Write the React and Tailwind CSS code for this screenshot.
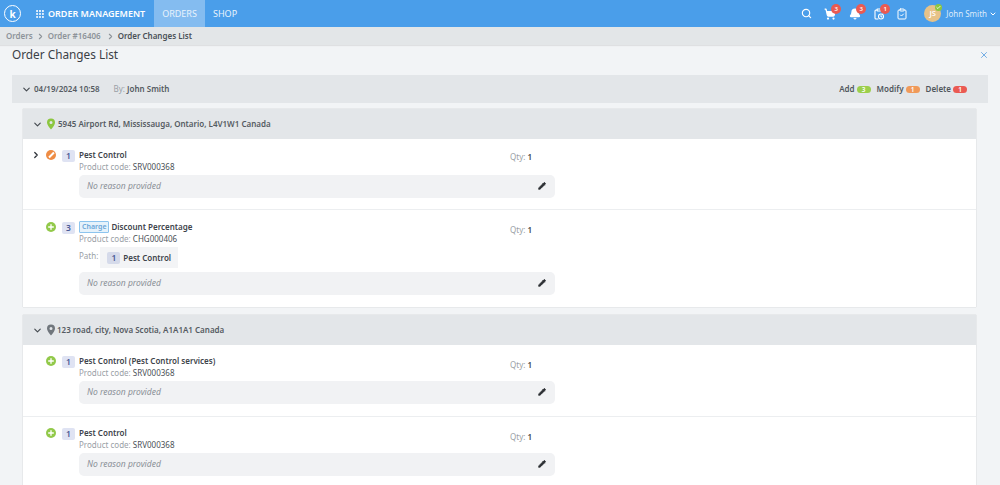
import React from "react";
import { Search, ShoppingCart, Bell, ClipboardCheck, ChevronDown, ChevronRight, X, Pencil, Plus, Check, Grip } from "lucide-react";

const font = { fontFamily: '"Noto Sans", "Open Sans", sans-serif' };

function Badge({ n }) {
  return <span className="absolute -top-[4px] left-[7px] w-[10px] h-[10px] rounded-full bg-[#ea5a52] text-white text-[6px] leading-[10px] text-center font-semibold">{n}</span>;
}

function Pin({ className }) {
  return (
    <svg viewBox="0 0 24 24" width="12" height="12" className={className}>
      <path fill="currentColor" fillRule="evenodd" d="M12 1a8 8 0 0 0-8 8c0 5.5 8 14 8 14s8-8.500 8-14a8 8 0 0 0-8-8zm0 11a3 3 0 1 1 0-6 3 3 0 0 1 0 6z" />
    </svg>
  );
}

function ClipClock() {
  return (
    <svg viewBox="0 0 24 24" width="12" height="12" fill="none" stroke="white" strokeWidth="2.2" strokeLinecap="round" strokeLinejoin="round">
      <path d="M9 4H6a2 2 0 0 0-2 2v14a2 2 0 0 0 2 2h4" />
      <path d="M15 4h3a2 2 0 0 1 2 2v4" />
      <rect x="8" y="2" width="8" height="4" rx="1" />
      <circle cx="16" cy="17" r="5" />
      <path d="M16 15v2l1.500 1" />
    </svg>
  );
}

function StatusIcon({ kind }) {
  if (kind === "add") return <span className="w-[10px] h-[10px] rounded-full bg-[#92c94a] flex items-center justify-center"><Plus size={8} strokeWidth={4} className="text-white" /></span>;
  return <span className="w-[10px] h-[10px] rounded-full bg-[#ee8c44] flex items-center justify-center"><span className="w-[7px] h-[2px] bg-white -rotate-45" /></span>;
}

function Num({ n, muted }) {
  return <span className={`block w-[13px] h-[12px] rounded-[2px] ${muted ? "bg-[#d5daea]" : "bg-[#dfe3f3]"} text-[#4a5a96] text-[8.5px] leading-[12px] text-center font-semibold shrink-0`}>{n}</span>;
}

function Reason() {
  return (
    <div className="h-[23px] w-[476px] rounded-[5px] bg-[#f1f2f4] flex items-center justify-between pl-[8px] pr-[9px]">
      <span className="text-[8.5px] italic text-[#8a9097]">No reason provided</span>
      <Pencil size={8} strokeWidth={3} className="text-[#2c2f33] fill-[#2c2f33] -mt-[2px]" />
    </div>
  );
}

function Item({ kind, num, chevron, charge, name, code, path, pt, h, qtyPt, border = true }) {
  return (
    <div className={`flex ${pt} ${h} ${border ? "border-b border-[#eceef0]" : ""}`}>
      <div className="w-[22px] shrink-0 flex justify-end pr-[4px] pt-[1px]">
        {chevron && <ChevronRight size={10} strokeWidth={3} className="text-[#2f343a]" />}
      </div>
      <div className="w-[17px] shrink-0 pl-[1px] pt-[1px]"><StatusIcon kind={kind} /></div>
      <div className="w-[17px] shrink-0 pt-[1px]"><Num n={num} /></div>
      <div className="w-[476px] shrink-0">
        <div className="flex">
          <div className="w-[431px]">
            <div className="flex items-center h-[12px] gap-[2px] text-[8px] font-semibold text-[#3e444b]">
              {charge && <span className="h-[12px] px-[2px] border border-[#8cc4ee] bg-[#e5f2fb] text-[#6aa6d8] text-[7px] leading-[10px] rounded-[1px]">Charge</span>}
              <span>{name}</span>
            </div>
            <div className={`text-[8px] leading-[11px] text-[#9aa0a6] ${path ? "mb-[2px]" : "mb-[3px]"}`}>Product code: <span className="text-[#4b5157]">{code}</span></div>
          </div>
          <div className={`${qtyPt} text-[8px] leading-[12px] text-[#9aa0a6]`}>Qty: <span className="font-semibold text-[#3e444b]">1</span></div>
        </div>
        {path && (
          <div className="flex items-start text-[8px] text-[#9aa0a6] mb-[4px] mt-[1px]">
            <span className="mt-[3px] mr-[2px]">Path:</span>
            <span className="h-[21px] px-[7px] bg-[#f3f4f6] flex items-center gap-[3px] text-[8px] font-semibold text-[#3e444b]"><Num n="1" muted />Pest Control</span>
          </div>
        )}
        <Reason />
      </div>
    </div>
  );
}

function Address({ text, green }) {
  return (
    <div className="h-[30px] bg-[#e3e6e9] flex items-center pl-[9px] text-[8px] font-semibold text-[#555b62]">
      <ChevronDown size={11} strokeWidth={2.5} className="text-[#444a50] mr-[2px]" />
      <Pin className={green ? "text-[#8cc63f] mr-[1px]" : "text-[#70767c] mr-[0px]"} />
      <span>{text}</span>
    </div>
  );
}

function Pill({ label, n, color }) {
  return (
    <span className="flex items-center gap-[2px] text-[8px] font-semibold text-[#50565c]">
      {label}
      <span className={`w-[14px] h-[7px] rounded-full ${color} text-white text-[6.500px] leading-[7px] text-center`}>{n}</span>
    </span>
  );
}

export default function App() {
  return (
    <div style={font} className="w-[1000px] h-[485px] overflow-hidden bg-[#f2f4f6] flex flex-col">
      <header className="h-[27px] bg-[#4a9eea] flex items-center shrink-0 text-white">
        <div className="w-[35px] pl-[4px] flex">
          <span className="w-[17px] h-[17px] rounded-full border border-white flex items-center justify-center text-[10px] font-bold leading-none">k</span>
        </div>
        <Grip size={10} strokeWidth={3} className="mr-[3px]" />
        <span className="text-[9px] font-semibold w-[106px]">ORDER MANAGEMENT</span>
        <span className="h-full w-[51px] bg-[#84bcf0] flex items-center justify-center text-[9px] text-[#e9f3fc]">ORDERS</span>
        <span className="ml-[8px] text-[9px] text-[#e9f3fc]">SHOP</span>
        <div className="ml-auto flex items-center">
          <Search size={11} strokeWidth={2.5} className="mr-[12px]" />
          <span className="relative mr-[13px]"><ShoppingCart size={12} strokeWidth={2.5} className="fill-white" /><Badge n="3" /></span>
          <span className="relative mr-[12px]"><Bell size={12} strokeWidth={2.5} className="fill-white" /><Badge n="3" /></span>
          <span className="relative mr-[11px]"><ClipClock /><Badge n="1" /></span>
          <ClipboardCheck size={12} strokeWidth={2} className="mr-[16px]" />
          <span className="relative w-[17px] h-[17px] rounded-full bg-[#e7c288] text-white text-[7.500px] font-semibold flex items-center justify-center mr-[5px]">JS
            <span className="absolute -top-[1px] -right-[1px] w-[7px] h-[7px] rounded-full bg-[#8cc63f] flex items-center justify-center"><Check size={5} strokeWidth={4} /></span>
          </span>
          <span className="text-[8px] text-[#dcebfa]">John Smith</span>
          <ChevronDown size={8} strokeWidth={3} className="ml-[2px] mr-[3px]" />
        </div>
      </header>
      <nav className="h-[18px] bg-[#e3e6e8] flex items-center pl-[6px] text-[8px] font-semibold text-[#8d9399] shrink-0 shadow-[0_1px_1px_rgba(0,0,0,0.08)]">
        <span>Orders</span>
        <ChevronRight size={9} strokeWidth={3} className="ml-[3px] mr-[3px]" />
        <span>Order #16406</span>
        <ChevronRight size={9} strokeWidth={3} className="ml-[5px] mr-[3px]" />
        <span className="text-[#4b5157]">Order Changes List</span>
      </nav>
      <main className="px-[12px] flex-1 min-h-0">
        <div className="flex items-center justify-between h-[20px] mb-[10px]">
          <h1 className="text-[11.800px] font-normal text-[#3b4046]">Order Changes List</h1>
          <X size={10} strokeWidth={2} className="text-[#5a9fe0] -mr-[1px]" />
        </div>
        <div className="h-[28px] bg-[#e3e6e9] flex items-center pl-[9px] pr-[21px] text-[8px] font-semibold text-[#555b62]">
          <ChevronDown size={11} strokeWidth={2.5} className="text-[#444a50] mr-[2px]" />
          <span>04/19/2024 10:58</span>
          <span className="ml-[14px] font-normal text-[#9aa0a6]">By:</span>
          <span className="ml-[2px]">John Smith</span>
          <span className="ml-auto flex items-center gap-[6px]">
            <Pill label="Add" n="3" color="bg-[#9ccf4b]" />
            <Pill label="Modify" n="1" color="bg-[#f09a5a]" />
            <Pill label="Delete" n="1" color="bg-[#ea5a52]" />
          </span>
        </div>
        <div className="pl-[11px] pr-[12px] pt-[6px]">
          <section className="shadow-[0_0_1px_rgba(0,0,0,0.25)] mb-[8px] bg-white">
            <Address text="5945 Airport Rd, Mississauga, Ontario, L4V1W1 Canada" green />
            <Item kind="mod" num="1" chevron name="Pest Control" code="SRV000368" pt="pt-[10px]" h="h-[71px]" qtyPt="pt-[2px]" />
            <Item kind="add" num="3" charge name="Discount Percentage" code="CHG000406" path pt="pt-[11px]" h="h-[97px]" qtyPt="pt-[3px]" border={false} />
          </section>
          <section className="shadow-[0_0_1px_rgba(0,0,0,0.25)] bg-white">
            <Address text="123 road, city, Nova Scotia, A1A1A1 Canada" />
            <Item kind="add" num="1" name="Pest Control (Pest Control services)" code="SRV000368" pt="pt-[10px]" h="h-[72px]" qtyPt="pt-[4px]" />
            <Item kind="add" num="1" name="Pest Control" code="SRV000368" pt="pt-[10px]" h="h-[72px]" qtyPt="pt-[4px]" border={false} />
          </section>
        </div>
      </main>
    </div>
  );
}
